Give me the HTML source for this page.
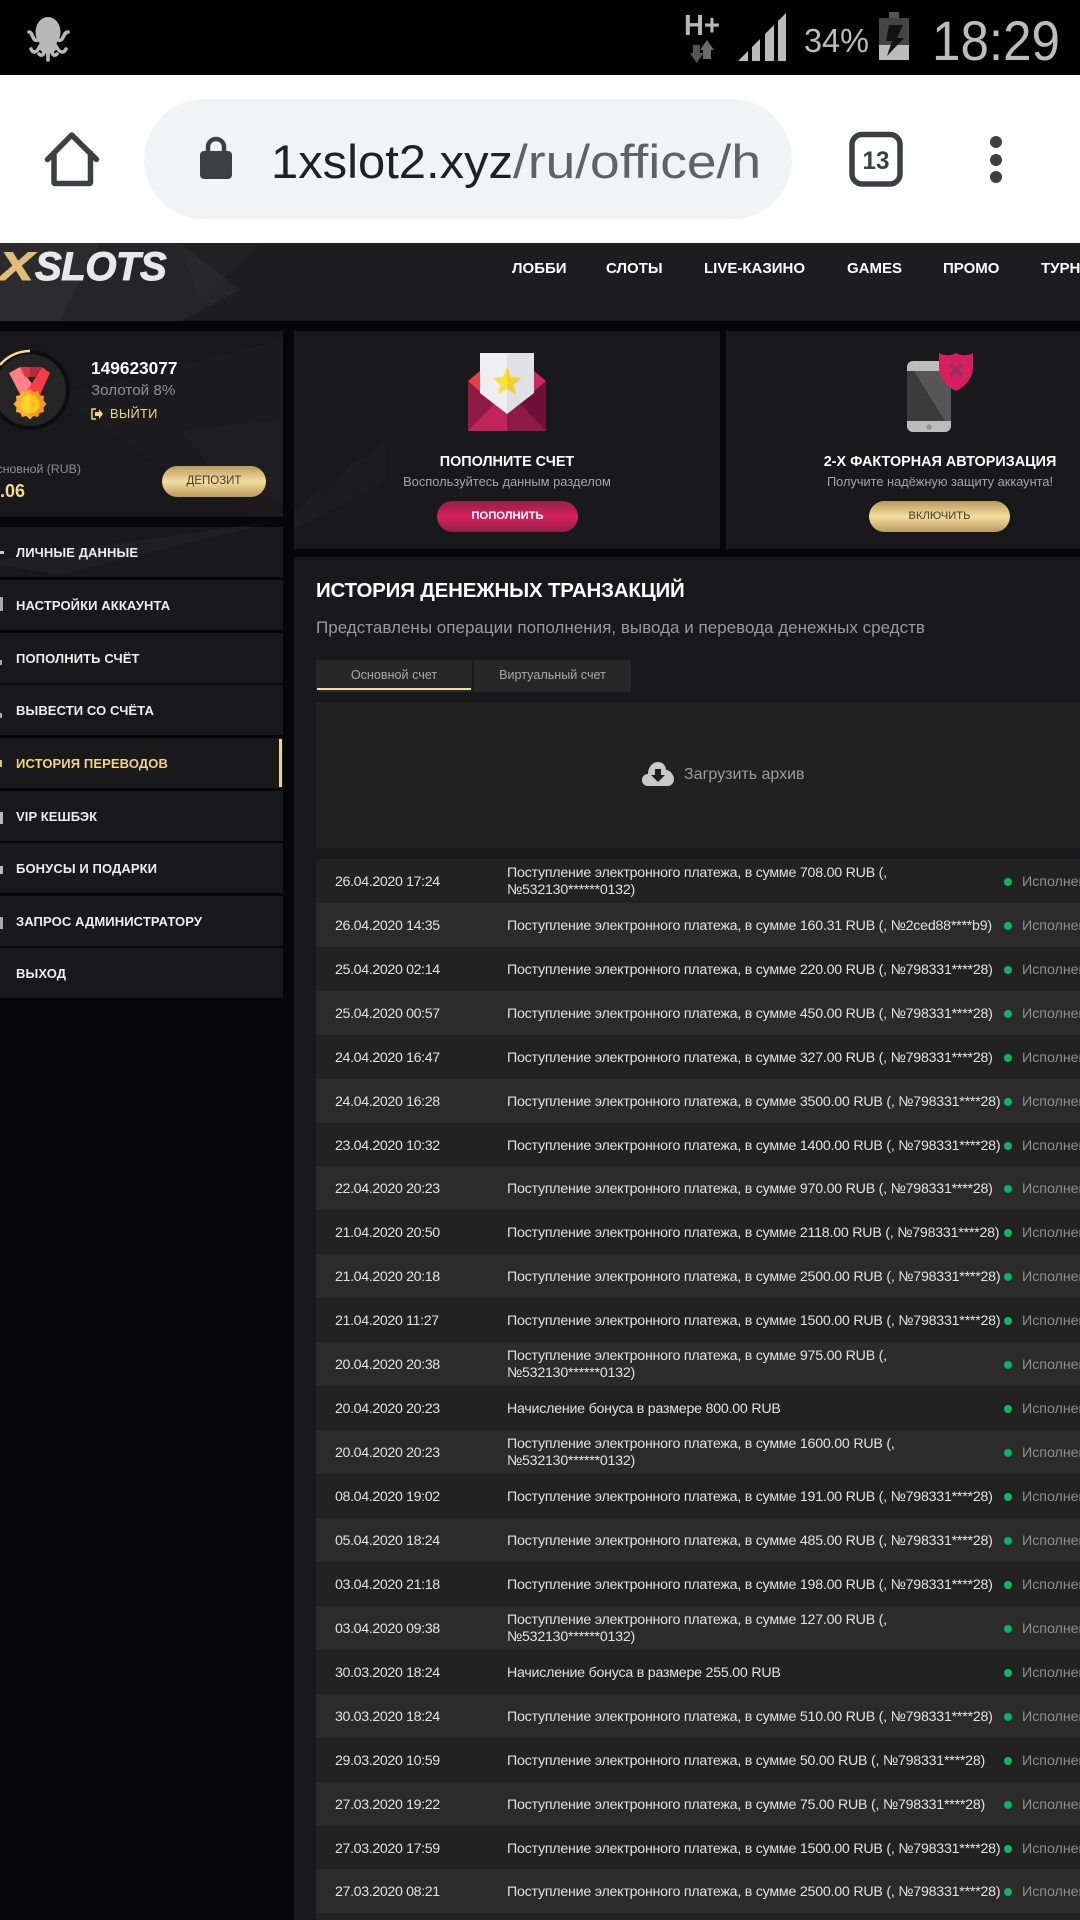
<!DOCTYPE html>
<html lang="ru"><head><meta charset="utf-8"><title>1xslots</title>
<style>
html,body{margin:0;padding:0;background:#060609;width:1080px;height:1920px;overflow:hidden}
body{position:relative;font-family:"Liberation Sans",sans-serif;color:#ddd}
#p{position:absolute;left:0;top:0;width:1080px;height:1920px;overflow:hidden}
.a{position:absolute;white-space:nowrap}
svg{position:absolute;left:0;top:0}
.card{position:absolute;background:#19191b}
.m{position:absolute;left:0;width:283px;height:50px;background:#19191b;font-weight:bold;font-size:13px;letter-spacing:.1px;line-height:51px;color:#eee;text-indent:16px;white-space:nowrap}
.nav{position:absolute;top:260px;font-weight:bold;font-size:15px;line-height:18px;color:#fff;white-space:nowrap}
.btn{position:absolute;border-radius:16px;text-align:center;font-size:11.2px;font-weight:bold;line-height:31px;height:31px;white-space:nowrap}
.gold{background:linear-gradient(#b99a5f,#f4dd9f 50%,#b99a5f);color:#443b2d}
.r{position:absolute;left:316px;width:764px;height:44px;background:#222;font-size:14.2px;color:#e2e2e2}
.r.o{background:#2b2b2b}
.r i{position:absolute;left:19px;top:1px;line-height:44px;font-style:normal;white-space:nowrap;letter-spacing:-.35px}
.r b{position:absolute;left:191px;top:1px;font-weight:normal;line-height:44px;white-space:nowrap;letter-spacing:-.22px}
.r b.t{line-height:17px;top:6px}
.r u{position:absolute;left:688px;top:19px;width:8px;height:8px;border-radius:50%;background:#0cb560}
.r s{position:absolute;left:706px;top:1px;line-height:44px;text-decoration:none;color:#8e8e8e;white-space:nowrap}
</style></head>
<body><div id="p">
<!-- status bar -->
<div class="a" style="left:0;top:0;width:1080px;height:75px;background:#000"></div>
<svg width="1080" height="75" viewBox="0 0 1080 75">
  <g fill="#b8b8b8" stroke="none">
    <ellipse cx="48" cy="32" rx="12.5" ry="15"/>
    <ellipse cx="48" cy="46" rx="9" ry="8"/>
  </g>
  <g fill="none" stroke="#b8b8b8" stroke-width="3.6" stroke-linecap="round">
    <path d="M38 40C32 42 33 32 29 32"/>
    <path d="M58 40C64 42 63 32 68 32"/>
    <path d="M40 46C36 54 33 53 31 49"/>
    <path d="M56 46C60 54 64 53 66 49"/>
    <path d="M44 50C44 56 41 56 39 54"/>
    <path d="M52 50C52 56 55 56 57 54"/>
    <path d="M48 50V60"/>
  </g>
  <text x="684" y="35" font-family="Liberation Sans" font-weight="bold" font-size="29" fill="#b8b8b8" textLength="36" lengthAdjust="spacingAndGlyphs">H+</text>
  <path d="M693 45H700V53H704L696.500 63L690 53H693Z" fill="#555"/>
  <path d="M707 40L714 50H711V59H703V50H700Z" fill="#6a6a6a"/>
  <g fill="#bcbcbc">
    <path d="M738 61L748 51V61Z"/>
    <path d="M752 61V47L760 39V61Z"/>
    <path d="M765 61V34L774 25V61Z"/>
    <path d="M778 61V21L786 13V61Z"/>
  </g>
  <text x="804" y="52" font-family="Liberation Sans" font-size="33" fill="#bcbcbc" textLength="65" lengthAdjust="spacingAndGlyphs">34%</text>
  <rect x="889" y="12" width="10" height="7" fill="#555"/>
  <rect x="879" y="18" width="30" height="27" fill="#444"/>
  <rect x="879" y="45" width="30" height="15" fill="#bcbcbc"/>
  <path d="M889 25H903L897 38H904L887 56L892 41H886Z" fill="#111"/>
  <text x="932" y="60" font-family="Liberation Sans" font-size="56" fill="#bcbcbc" textLength="128" lengthAdjust="spacingAndGlyphs">18:29</text>
</svg>
<!-- browser bar -->
<div class="a" style="left:0;top:75px;width:1080px;height:168px;background:#fff"></div>
<div class="a" style="left:144px;top:99px;width:648px;height:120px;border-radius:60px;background:#f1f3f4"></div>
<svg width="1080" height="243" viewBox="0 0 1080 243" style="top:0">
  <path d="M47.500 159.500L71.700 135L96.500 159.500M54 153V182.500a1 1 0 0 0 1 1H89.500a1 1 0 0 0 1-1V153" fill="none" stroke="#3c4043" stroke-width="5.500" stroke-linecap="round" stroke-linejoin="round"/>
  <rect x="200" y="151" width="32" height="28" rx="4" fill="#3c4043"/>
  <path d="M208 153V147a8 8 0 0 1 16 0V153" fill="none" stroke="#3c4043" stroke-width="4.500"/>
  <text x="271" y="178" font-family="Liberation Sans" font-size="47" fill="#202124" textLength="242" lengthAdjust="spacingAndGlyphs">1xslot2.xyz</text>
  <text x="513" y="178" font-family="Liberation Sans" font-size="47" fill="#5f6368" textLength="248" lengthAdjust="spacingAndGlyphs">/ru/office/h</text>
  <rect x="852" y="134.500" width="48" height="49.500" rx="10" fill="none" stroke="#3c4043" stroke-width="5.500"/>
  <text x="876" y="169" text-anchor="middle" font-family="Liberation Sans" font-weight="bold" font-size="25" fill="#3c4043" textLength="27" lengthAdjust="spacingAndGlyphs">13</text>
  <circle cx="996" cy="142" r="6" fill="#3c4043"/><circle cx="996" cy="160" r="6" fill="#3c4043"/><circle cx="996" cy="177" r="6" fill="#3c4043"/>
</svg>
<!-- site header -->
<div class="a" style="left:0;top:243px;width:1080px;height:78px;background:#1d1d1f"></div>
<!-- sidebar card -->
<div class="card" style="left:0;top:331px;width:283px;height:186px"></div>
<!-- menu -->
<div class="m" style="top:527px">ЛИЧНЫЕ ДАННЫЕ</div>
<div class="m" style="top:580px">НАСТРОЙКИ АККАУНТА</div>
<div class="m" style="top:633px">ПОПОЛНИТЬ СЧЁТ</div>
<div class="m" style="top:685px">ВЫВЕСТИ СО СЧЁТА</div>
<div class="m" style="top:738px;color:#efd28c">ИСТОРИЯ ПЕРЕВОДОВ</div>
<div class="a" style="left:279px;top:739px;width:3px;height:48px;background:#efd28c"></div>
<div class="m" style="top:791px">VIP КЕШБЭК</div>
<div class="m" style="top:843px">БОНУСЫ И ПОДАРКИ</div>
<div class="m" style="top:896px">ЗАПРОС АДМИНИСТРАТОРУ</div>
<div class="m" style="top:948px">ВЫХОД</div>
<div class="a" style="left:0;top:551px;width:4px;height:3px;background:#ccc"></div>
<div class="a" style="left:0;top:597px;width:3px;height:14px;background:#aaa"></div>
<div class="a" style="left:0;top:660px;width:2px;height:5px;background:#aaa"></div>
<div class="a" style="left:0;top:713px;width:2px;height:5px;background:#aaa"></div>
<div class="a" style="left:0;top:760px;width:2px;height:7px;background:#d8bd80"></div>
<div class="a" style="left:0;top:812px;width:3px;height:12px;background:#bbb"></div>
<div class="a" style="left:0;top:866px;width:3px;height:8px;background:#bbb"></div>
<div class="a" style="left:0;top:917px;width:3px;height:12px;background:#aaa"></div>
<!-- promo cards -->
<div class="card" style="left:294px;top:331px;width:426px;height:218px"></div>
<div class="card" style="left:726px;top:331px;width:354px;height:218px"></div>
<!-- main panel -->
<div class="card" style="left:294px;top:557px;width:786px;height:1363px"></div>
<!-- polygon texture -->
<svg width="600" height="760" viewBox="0 0 600 760" style="top:0;pointer-events:none">
  <g fill="#fff">
    <path d="M100 243L180 243L240 290L180 321L60 321Z" opacity=".04"/>
    <path d="M0 243H100L60 321H0Z" opacity=".07"/>
    <path d="M180 243H260L200 300Z" opacity=".02"/>
    <path d="M60 395L283 340V500L180 480Z" opacity=".015"/>
    <path d="M180 430L283 420V517H250Z" opacity=".01"/>
    <path d="M0 560L283 520L200 540L60 575L0 565Z" opacity=".03"/>
    <path d="M294 510L385 440V480L294 530Z" opacity=".018"/>
  </g>
</svg>
<!-- logo -->
<div class="a" style="left:35px;top:245px;font:italic bold 40px/44px 'Liberation Sans',sans-serif;letter-spacing:-.4px;-webkit-text-stroke:1px #e8e8e8;color:#e8e8e8">SLOTS</div>
<div class="a" style="left:7px;top:245px;font:italic bold 40px/44px 'Liberation Sans',sans-serif;-webkit-text-stroke:1px #dfbe76;color:#dfbe76;transform:scaleX(1.3);transform-origin:100% 50%">X</div>
<!-- nav -->
<div class="nav" style="left:512px">ЛОББИ</div>
<div class="nav" style="left:606px">СЛОТЫ</div>
<div class="nav" style="left:704px">LIVE-КАЗИНО</div>
<div class="nav" style="left:847px">GAMES</div>
<div class="nav" style="left:943px">ПРОМО</div>
<div class="nav" style="left:1041px">ТУРНИРЫ</div>
<!-- medal -->
<svg width="90" height="100" viewBox="0 345 90 100" style="top:345px">
  <circle cx="30" cy="390" r="40" fill="#0d0d0f"/>
  <circle cx="30" cy="390" r="36" fill="#252525"/>
  <path d="M30 351A39 39 0 0 0 0 365" fill="none" stroke="#f1d999" stroke-width="2.500"/>
  <path d="M9 373L20 367L37 391L22 398Z" fill="#ff8088"/>
  <path d="M50 373L42 367L27 391L39 397Z" fill="#f33e48"/>
  <path d="M20 367H30V377H25Z" fill="#dc3443"/>
  <path d="M30 367H42L35 377H30Z" fill="#b02b3b"/>
  <path d="M30 389l3.500 3 4.500-1 1.500 4 4.500 1-.5 4.500 3 3.500-3 3.500.5 4.500-4.500 1-1.500 4-4.500-1-3.500 3.500V389Z" fill="#f29a1f"/>
  <path d="M30 389l-3.500 3-4.500-1-1.500 4-4.500 1 .5 4.500-3 3.500 3 3.500-.5 4.500 4.500 1 1.500 4 4.500-1 3.500 3.500V389Z" fill="#ffb02e"/>
  <circle cx="30" cy="404" r="9.500" fill="#ffd42a"/>
  <path d="M30 394.500a9.500 9.500 0 0 1 0 19Z" fill="#ffc21f"/>
</svg>
<div class="a" style="left:91px;top:358px;font-weight:bold;font-size:17.300px;line-height:20px;color:#fff">149623077</div>
<div class="a" style="left:91px;top:381px;font-size:15.200px;line-height:20px;color:#8f8f8f">Золотой 8%</div>
<svg width="20" height="14" viewBox="0 0 20 14" style="left:91px;top:408px"><path d="M5 1H1V11H5" fill="none" stroke="#efd28c" stroke-width="1.500"/><path d="M4 4H8V1L12 6L8 11V8H4Z" fill="#efd28c"/></svg>
<div class="a" style="left:110px;top:405px;font-size:12.800px;line-height:18px;color:#efd28c;letter-spacing:.3px">ВЫЙТИ</div>
<div class="a" style="left:-13px;top:461px;font-size:12.300px;line-height:16px;color:#8f8f8f">Основной (RUB)</div>
<div class="a" style="left:0;top:481px;font-weight:bold;font-size:18px;line-height:20px;color:#f1d999">.06</div>
<div class="btn gold" style="left:162px;top:466px;width:104px;font-weight:normal;font-size:11.500px">ДЕПОЗИТ</div>
<!-- promo 1 -->
<svg width="100" height="100" viewBox="460 345 100 100" style="left:460px;top:345px">
  <path d="M468 381L480 371V394Z" fill="#e53f4a"/>
  <path d="M546 381L534 371V394Z" fill="#d0255e"/>
  <path d="M468 381L507 415V431H468Z" fill="#8e1a45"/>
  <path d="M546 381L507 415V431H546Z" fill="#6d1236"/>
  <path d="M468 431L494 404L507 414V431Z" fill="#c0245a"/>
  <path d="M546 431L520 404L507 414V431Z" fill="#8e1a45"/>
  <path d="M480 353H507V414L480 393Z" fill="#eeeef0"/>
  <path d="M534 353H507V414L534 393Z" fill="#e0e0e5"/>
  <path d="M507 367L511 377L521 378L513.500 385L516 394L507 389L498 394L500.500 385L493 378L503 377Z" fill="#f5e23c"/>
  <path d="M507 367L511 377L521 378L513.500 385L516 394L507 389Z" fill="#f2cf30"/>
</svg>
<div class="a" style="left:294px;width:426px;top:453px;text-align:center;font-weight:bold;font-size:14.400px;line-height:18px;color:#fff">ПОПОЛНИТЕ СЧЕТ</div>
<div class="a" style="left:294px;width:426px;top:474px;text-align:center;font-size:12.900px;line-height:16px;color:#a5a5a5">Воспользуйтесь данным разделом</div>
<div class="btn" style="left:437px;top:501px;width:141px;background:linear-gradient(#8f2346,#d81f5e 50%,#8f2346);color:#fff">ПОПОЛНИТЬ</div>
<!-- promo 2 -->
<svg width="100" height="100" viewBox="895 345 100 100" style="left:895px;top:345px">
  <rect x="907" y="361" width="44" height="71" rx="6" fill="#bdbdbd"/>
  <rect x="907" y="371" width="44" height="50" fill="#3b3b3b"/>
  <path d="M914 371H951V421H945Z" fill="#565656"/>
  <circle cx="929" cy="427" r="2.800" fill="#939393"/>
  <path d="M939 353C944 356 951 356 956 353C961 356 968 356 973 353V366C973 378 966 386 956 391C946 386 939 378 939 366Z" fill="#d81f5e"/>
  <path d="M950 364L962 376M962 364L950 376" stroke="#a52a62" stroke-width="4.500"/>
</svg>
<div class="a" style="left:726px;width:428px;top:453px;text-align:center;font-weight:bold;font-size:14.400px;line-height:18px;color:#fff">2-Х ФАКТОРНАЯ АВТОРИЗАЦИЯ</div>
<div class="a" style="left:726px;width:428px;top:474px;text-align:center;font-size:12.800px;line-height:16px;color:#a5a5a5">Получите надёжную защиту аккаунта!</div>
<div class="btn gold" style="left:869px;top:501px;width:141px;font-weight:normal">ВКЛЮЧИТЬ</div>
<!-- heading -->
<div class="a" style="left:316px;top:579px;font-weight:bold;font-size:20.500px;line-height:24px;color:#fff;letter-spacing:-.2px">ИСТОРИЯ ДЕНЕЖНЫХ ТРАНЗАКЦИЙ</div>
<div class="a" style="left:316px;top:618px;font-size:17.050px;line-height:20px;color:#9a9a9a">Представлены операции пополнения, вывода и перевода денежных средств</div>
<!-- tabs -->
<div class="a" style="left:316px;top:660px;width:156px;height:32px;background:#272727;font-size:12.600px;line-height:30px;text-align:center;color:#a9a9a9">Основной счет</div>
<div class="a" style="left:317px;top:688px;width:154px;height:2px;background:#f5dc9a"></div>
<div class="a" style="left:474px;top:660px;width:157px;height:32px;background:#272727;font-size:12.600px;line-height:30px;text-align:center;color:#a9a9a9">Виртуальный счет</div>
<!-- archive -->
<div class="a" style="left:316px;top:702px;width:764px;height:146px;background:#212121"></div>
<svg width="34" height="26" viewBox="0 0 34 26" style="left:641px;top:761px">
  <path d="M7 25C3 25 1 22 1 19C1 15 4 13 7 13C7 7 11 1 17 1C22 1 25 5 25 9C29 9 33 14 33 18C33 22 30 25 27 25Z" fill="#c9c9c9"/>
  <path d="M14 8H20V14H24L17 21L10 14H14Z" fill="#212121"/>
</svg>
<div class="a" style="left:684px;top:766px;font-size:16px;line-height:18px;color:#9c9c9c">Загрузить архив</div>
<!-- rows -->
<div class="r" style="top:859px"><i>26.04.2020 17:24</i><b class="t">Поступление электронного платежа, в сумме 708.00 RUB (,<br>№532130******0132)</b><u></u><s>Исполнено</s></div>
<div class="r o" style="top:903px"><i>26.04.2020 14:35</i><b>Поступление электронного платежа, в сумме 160.31 RUB (, №2ced88****b9)</b><u></u><s>Исполнено</s></div>
<div class="r" style="top:947px"><i>25.04.2020 02:14</i><b>Поступление электронного платежа, в сумме 220.00 RUB (, №798331****28)</b><u></u><s>Исполнено</s></div>
<div class="r o" style="top:991px"><i>25.04.2020 00:57</i><b>Поступление электронного платежа, в сумме 450.00 RUB (, №798331****28)</b><u></u><s>Исполнено</s></div>
<div class="r" style="top:1035px"><i>24.04.2020 16:47</i><b>Поступление электронного платежа, в сумме 327.00 RUB (, №798331****28)</b><u></u><s>Исполнено</s></div>
<div class="r o" style="top:1079px"><i>24.04.2020 16:28</i><b>Поступление электронного платежа, в сумме 3500.00 RUB (, №798331****28)</b><u></u><s>Исполнено</s></div>
<div class="r" style="top:1123px"><i>23.04.2020 10:32</i><b>Поступление электронного платежа, в сумме 1400.00 RUB (, №798331****28)</b><u></u><s>Исполнено</s></div>
<div class="r o" style="top:1166px"><i>22.04.2020 20:23</i><b>Поступление электронного платежа, в сумме 970.00 RUB (, №798331****28)</b><u></u><s>Исполнено</s></div>
<div class="r" style="top:1210px"><i>21.04.2020 20:50</i><b>Поступление электронного платежа, в сумме 2118.00 RUB (, №798331****28)</b><u></u><s>Исполнено</s></div>
<div class="r o" style="top:1254px"><i>21.04.2020 20:18</i><b>Поступление электронного платежа, в сумме 2500.00 RUB (, №798331****28)</b><u></u><s>Исполнено</s></div>
<div class="r" style="top:1298px"><i>21.04.2020 11:27</i><b>Поступление электронного платежа, в сумме 1500.00 RUB (, №798331****28)</b><u></u><s>Исполнено</s></div>
<div class="r o" style="top:1342px"><i>20.04.2020 20:38</i><b class="t">Поступление электронного платежа, в сумме 975.00 RUB (,<br>№532130******0132)</b><u></u><s>Исполнено</s></div>
<div class="r" style="top:1386px"><i>20.04.2020 20:23</i><b>Начисление бонуса в размере 800.00 RUB</b><u></u><s>Исполнено</s></div>
<div class="r o" style="top:1430px"><i>20.04.2020 20:23</i><b class="t">Поступление электронного платежа, в сумме 1600.00 RUB (,<br>№532130******0132)</b><u></u><s>Исполнено</s></div>
<div class="r" style="top:1474px"><i>08.04.2020 19:02</i><b>Поступление электронного платежа, в сумме 191.00 RUB (, №798331****28)</b><u></u><s>Исполнено</s></div>
<div class="r o" style="top:1518px"><i>05.04.2020 18:24</i><b>Поступление электронного платежа, в сумме 485.00 RUB (, №798331****28)</b><u></u><s>Исполнено</s></div>
<div class="r" style="top:1562px"><i>03.04.2020 21:18</i><b>Поступление электронного платежа, в сумме 198.00 RUB (, №798331****28)</b><u></u><s>Исполнено</s></div>
<div class="r o" style="top:1606px"><i>03.04.2020 09:38</i><b class="t">Поступление электронного платежа, в сумме 127.00 RUB (,<br>№532130******0132)</b><u></u><s>Исполнено</s></div>
<div class="r" style="top:1650px"><i>30.03.2020 18:24</i><b>Начисление бонуса в размере 255.00 RUB</b><u></u><s>Исполнено</s></div>
<div class="r o" style="top:1694px"><i>30.03.2020 18:24</i><b>Поступление электронного платежа, в сумме 510.00 RUB (, №798331****28)</b><u></u><s>Исполнено</s></div>
<div class="r" style="top:1738px"><i>29.03.2020 10:59</i><b>Поступление электронного платежа, в сумме 50.00 RUB (, №798331****28)</b><u></u><s>Исполнено</s></div>
<div class="r o" style="top:1782px"><i>27.03.2020 19:22</i><b>Поступление электронного платежа, в сумме 75.00 RUB (, №798331****28)</b><u></u><s>Исполнено</s></div>
<div class="r" style="top:1826px"><i>27.03.2020 17:59</i><b>Поступление электронного платежа, в сумме 1500.00 RUB (, №798331****28)</b><u></u><s>Исполнено</s></div>
<div class="r o" style="top:1869px"><i>27.03.2020 08:21</i><b>Поступление электронного платежа, в сумме 2500.00 RUB (, №798331****28)</b><u></u><s>Исполнено</s></div>
<div class="r" style="top:1913px;height:7px"></div>
</div></body></html>
